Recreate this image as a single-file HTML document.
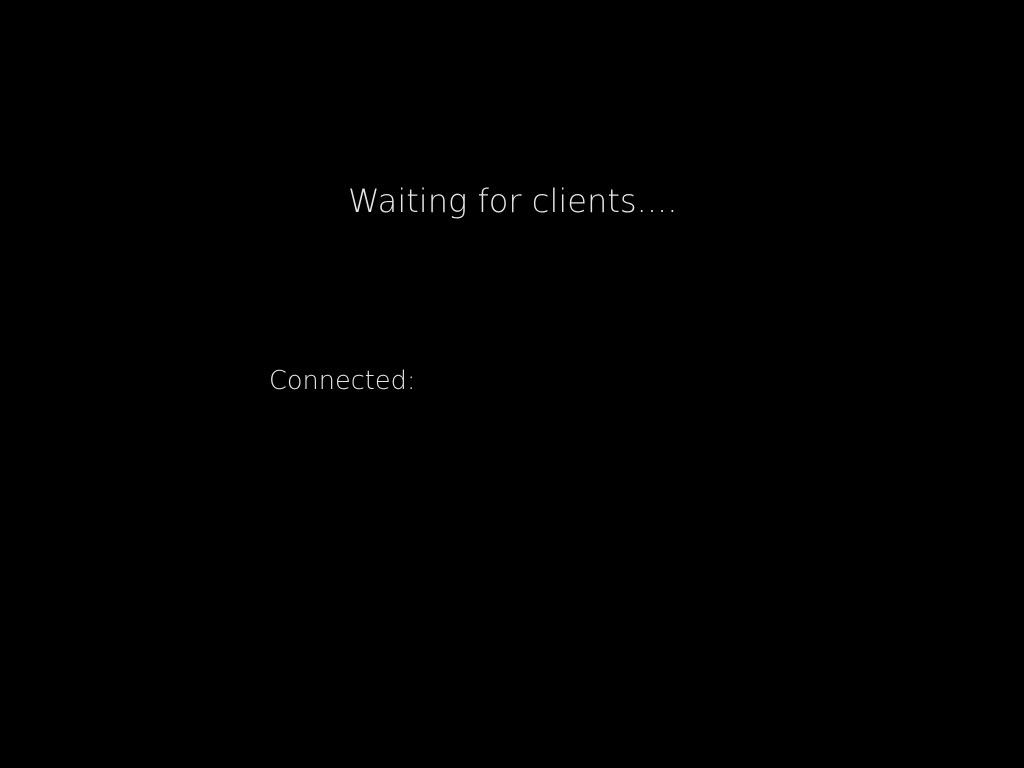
<!DOCTYPE html>
<html><head><meta charset="utf-8"><style>
html,body{margin:0;padding:0;background:#000;width:1024px;height:768px;overflow:hidden}
.t{position:absolute;font-family:"DejaVu Sans","Liberation Sans",sans-serif;font-weight:200;color:#e6e6e6;white-space:nowrap;line-height:1}
#a{left:348px;top:185px;font-size:32.1px}
#b{left:269px;top:369px;font-size:25.6px}
</style></head><body>
<div class="t" id="a">Waiting for clients....</div>
<div class="t" id="b">Connected:</div>
</body></html>
